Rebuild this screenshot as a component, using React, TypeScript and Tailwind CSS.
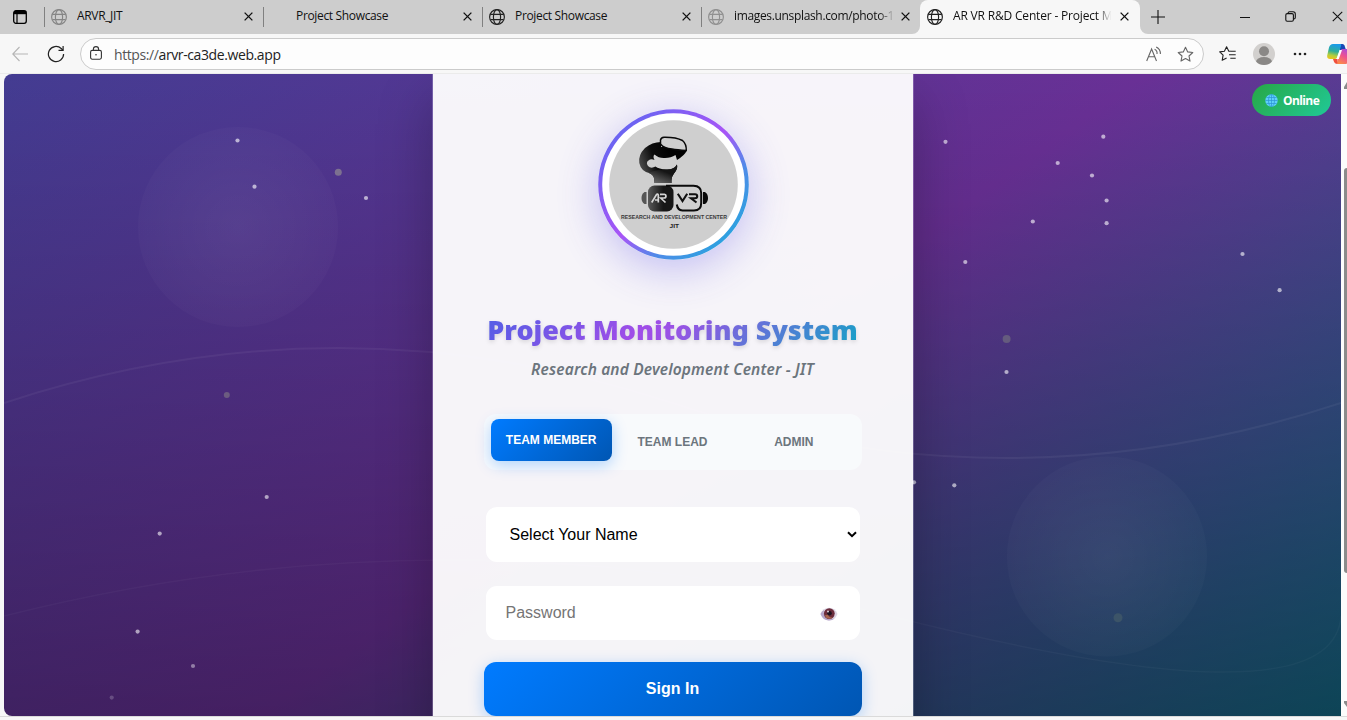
import React from "react";

const uiFont = "font-['Open_Sans','Noto_Sans',sans-serif]";

function Globe({ color }: { color: string }) {
  return (
    <svg width="16" height="16" viewBox="0 0 16 16" fill="none" stroke={color} strokeWidth="1.15" className="shrink-0">
      <circle cx="8" cy="8" r="7.4" />
      <ellipse cx="8" cy="8" rx="3.6" ry="7.4" />
      <path d="M1.4 5.4H14.6M1.4 10.6H14.6" />
    </svg>
  );
}

function Close({ size = 9, width = 1.5 }: { size?: number; width?: number }) {
  return (
    <svg width={size} height={size} viewBox="0 0 10 10" stroke="#111" strokeWidth={width} className="shrink-0">
      <path d="M0.7 0.7L9.3 9.3M9.3 0.7L0.7 9.3" />
    </svg>
  );
}

function Tab({ title, globe, fade }: { title: string; globe?: string; fade?: boolean }) {
  return (
    <div className="flex h-[33px] w-[219px] shrink-0 items-center">
      <div className="h-[20px] w-px bg-[#808080]" />
      <div className="ml-[6px] flex w-4">{globe && <Globe color={globe} />}</div>
      <div
        className={
          "ml-[10px] w-[161px] overflow-hidden whitespace-nowrap pb-px text-[12px] text-[#111] " +
          (fade ? "[mask-image:linear-gradient(to_right,#000_90%,transparent_100%)]" : "")
        }
      >
        <span className="tracking-[-0.34px]">{title}</span>
      </div>
      <div className="ml-[6px] flex">
        <Close />
      </div>
    </div>
  );
}

function TabBar() {
  return (
    <div className="flex h-[34px] w-full items-start bg-[#cdcdcd]">
      <div className="flex h-[33px] w-11 items-center pl-[13px]">
        <svg width="14" height="14" viewBox="0 0 14 14" fill="none" stroke="#000">
          <rect x="0.7" y="0.7" width="12.6" height="12.6" rx="2.2" strokeWidth="1.3" />
          <path d="M1 2.6H13" strokeWidth="3.2" />
          <path d="M4 4V13" strokeWidth="1.2" />
        </svg>
      </div>
      <Tab title="ARVR_JIT" globe="#858585" />
      <Tab title="Project Showcase" />
      <Tab title="Project Showcase" globe="#222" />
      <Tab title="images.unsplash.com/photo-1" globe="#909090" fade />
      <div className="relative flex h-[34px] w-[220px] shrink-0 items-center rounded-t-[8px] bg-[#f7f7f7] pb-px pl-[7px]">
        <svg width="8" height="8" className="absolute -left-[8px] bottom-0">
          <path d="M8 0V8H0A8 8 0 0 0 8 0Z" fill="#f7f7f7" />
        </svg>
        <svg width="8" height="8" className="absolute -right-[8px] bottom-0">
          <path d="M0 0V8H8A8 8 0 0 1 0 0Z" fill="#f7f7f7" />
        </svg>
        <Globe color="#222" />
        <div className="ml-[10px] w-[160px] overflow-hidden whitespace-nowrap pb-px text-[12px] text-[#111] [mask-image:linear-gradient(to_right,#000_90%,transparent_99%)]">
          <span className="tracking-[-0.18px]">AR VR R&amp;D Center - Project M</span>
        </div>
        <div className="ml-[7px] flex">
          <Close />
        </div>
      </div>
      <div className="flex h-[33px] flex-1 items-center overflow-hidden pl-[11px]">
        <svg width="14" height="14" viewBox="0 0 14 14" stroke="#111" strokeWidth="1.1" className="shrink-0">
          <path d="M7 0V14M0 7H14" />
        </svg>
        <svg width="10" height="10" viewBox="0 0 10 10" stroke="#111" strokeWidth="1" className="ml-[75px] shrink-0">
          <path d="M0 5.5H10" />
        </svg>
        <svg width="11" height="11" viewBox="0 0 11 11" fill="none" stroke="#111" strokeWidth="1.1" className="ml-[35px] shrink-0">
          <rect x="0.8" y="2.6" width="7.6" height="7.6" rx="1.4" />
          <path d="M3 2.4V2.2A1.6 1.6 0 0 1 4.6 .7H8A2.3 2.3 0 0 1 10.3 3V6.4A1.6 1.6 0 0 1 8.8 8" />
        </svg>
        <div className="ml-[36px] flex">
          <Close size={11} width={1} />
        </div>
      </div>
    </div>
  );
}

function Star({ color }: { color: string }) {
  return (
    <path
      d="M8.5 1.2L10.7 5.9L15.8 6.5L12 10L13 15.1L8.5 12.6L4 15.1L5 10L1.2 6.5L6.3 5.9Z"
      fill="none"
      stroke={color}
      strokeWidth="1.1"
      strokeLinejoin="round"
    />
  );
}

function Toolbar() {
  return (
    <div className="flex h-[39px] w-full items-center overflow-hidden bg-[#f7f7f7] pl-[12px] pt-px">
      <svg width="16" height="16" viewBox="0 0 16 16" fill="none" stroke="#b5b5b5" strokeWidth="1.1" className="shrink-0">
        <path d="M7.5 1L.8 8L7.5 15M.8 8H16" />
      </svg>
      <svg width="18" height="18" viewBox="0 0 18 18" fill="none" stroke="#222" strokeWidth="1.2" className="ml-[19px] shrink-0">
        <path d="M16.6 9A7.6 7.6 0 1 1 14.2 3.5L16 5.2" />
        <path d="M16.1 1V5.4H11.5" />
      </svg>
      <div className="ml-[15px] flex h-[32px] w-[1124px] shrink-0 items-center rounded-full border border-[#cbcbcb] bg-[#fdfdfd] pl-[9px]">
        <svg width="12" height="14" viewBox="0 0 12 14" fill="none" stroke="#333" strokeWidth="1.1" className="relative -top-px">
          <rect x="0.6" y="4.4" width="10.8" height="8.8" rx="1.6" />
          <path d="M3.4 4.4V3.2A2.6 2.6 0 0 1 8.6 3.2V4.4" />
          <circle cx="6" cy="8.8" r="0.8" fill="#333" stroke="none" />
        </svg>
        <div className="ml-[12px] flex-1 whitespace-nowrap text-[14px] tracking-[-0.4px] text-[#222]">
          <span className="text-[#555]">https://</span>arvr-ca3de.web.app
        </div>
        <svg width="16" height="16" viewBox="0 0 16 16" fill="none" stroke="#666" strokeWidth="1.1">
          <path d="M.7 15L5.6 3L10.5 15M2.4 10.8H8.9" />
          <path d="M8.6 3.2A4.5 4.5 0 0 1 11 8M10.2 1A7.5 7.5 0 0 1 14.4 8" />
        </svg>
        <svg width="17" height="17" viewBox="0 0 17 17" className="ml-[15px] mr-[9px]">
          <Star color="#666" />
        </svg>
      </div>
      <svg width="17" height="16" viewBox="0 0 17 16" fill="none" stroke="#222" strokeWidth="1.1" strokeLinejoin="round" className="ml-[15px] shrink-0">
        <path d="M11.5 5.3L9.8 5.2L7.6 .8L5.4 5.2L.7 5.9L4.1 9.2L3.2 14.3L7.6 12" />
        <path d="M11.3 5.2H16.7M10 8.7H16.7M11.3 12.2H16.7" />
      </svg>
      <svg width="22" height="22" viewBox="0 0 22 22" className="ml-[17px] shrink-0">
        <defs>
          <clipPath id="avatar">
            <circle cx="11" cy="11" r="11" />
          </clipPath>
        </defs>
        <circle cx="11" cy="11" r="11" fill="#d2d0ce" />
        <g clipPath="url(#avatar)" fill="#8a8886">
          <circle cx="11" cy="8.2" r="5" />
          <ellipse cx="11" cy="19" rx="8" ry="5" />
        </g>
      </svg>
      <svg width="14" height="4" viewBox="0 0 14 4" fill="#222" className="ml-[18px] shrink-0">
        <circle cx="2" cy="2" r="1.3" />
        <circle cx="7" cy="2" r="1.3" />
        <circle cx="12" cy="2" r="1.3" />
      </svg>
      <svg width="24" height="22" viewBox="0 0 24 22" className="ml-[20px] shrink-0">
        <defs>
          <linearGradient id="cpA" x1="0.4" y1="0" x2="0.2" y2="1">
            <stop offset="0" stopColor="#1a9be8" />
            <stop offset="0.45" stopColor="#2fae98" />
            <stop offset="0.75" stopColor="#b6cf3a" />
            <stop offset="1" stopColor="#f0c21c" />
          </linearGradient>
          <linearGradient id="cpB" x1="0.8" y1="0" x2="0.3" y2="1">
            <stop offset="0" stopColor="#a34be6" />
            <stop offset="0.5" stopColor="#ee5090" />
            <stop offset="1" stopColor="#fb8a4a" />
          </linearGradient>
        </defs>
        <path d="M11 1H15.5Q17 1 17.500 2.500L19 7H13Z" fill="#1748b5" />
        <path d="M6 1H13.5Q14.6 1 14 3L10.6 14Q10 16 8 16H3Q-.5 16 .3 12L2 4.5Q3 1 6 1Z" fill="url(#cpA)" />
        <path d="M15.6 6H21Q24.5 6 23.8 10L22 17.5Q21 21 18 21H11Q9.6 21 10.2 19L13.4 8Q14 6 15.6 6Z" fill="url(#cpB)" />
        <path d="M6 16H10.5L10.500 21Q7.500 21 6.500 17.500Z" fill="#f0503c" />
        <path d="M12.6 7H15L11.8 16H9.400Z" fill="#fff" />
      </svg>
    </div>
  );
}

const stars: [number, number, number, number][] = [
  [237.5, 140.5, 2.1, 0.62], [254.5, 186.7, 2.1, 0.62], [366, 198, 2.1, 0.62], [266.7, 497, 2.1, 0.58],
  [159.7, 533.6, 2.1, 0.58], [137.6, 631.6, 2.1, 0.58], [193, 666, 2.1, 0.42], [111.7, 697.6, 2.1, 0.2],
  [945.5, 141.8, 2.1, 0.6], [1103.3, 136.7, 2.1, 0.6], [1057.7, 163, 2.1, 0.6], [1092, 175.5, 2.1, 0.6],
  [1106.6, 200.5, 2.1, 0.6], [1106.6, 223.2, 2.1, 0.6], [1032.8, 221.5, 2.1, 0.6], [965.3, 262, 2.1, 0.6],
  [1242.5, 254, 2.1, 0.6], [1279.6, 290.2, 2.1, 0.6], [1006.5, 372, 2.1, 0.6], [954.3, 485.3, 2.1, 0.6],
  [914, 482.3, 2.1, 0.6],
];

const orbs: [number, number, number, string][] = [
  [338.3, 172.2, 3.5, "#7c7090"], [226.8, 395, 3, "#6c5c80"],
  [1006.6, 339, 4, "#655b7e"], [1118, 617.7, 4.5, "#3c5468"],
];

function Backdrop() {
  return (
    <svg width="1337" height="642" viewBox="4 74 1337 642" className="absolute inset-0" fill="none">
      <defs>
        <radialGradient id="bubble">
          <stop offset="0" stopColor="#fff" stopOpacity="0.06" />
          <stop offset="1" stopColor="#fff" stopOpacity="0.02" />
        </radialGradient>
      </defs>
      <path d="M4 403Q338 293 672.5 403T1341 403" stroke="#fff" strokeOpacity="0.05" strokeWidth="2" />
      <path d="M4 616Q447 504 890 616T1341 616" stroke="#fff" strokeOpacity="0.03" strokeWidth="1.5" />
      <circle cx="238" cy="227" r="100" fill="url(#bubble)" />
      <circle cx="1107" cy="556.5" r="100" fill="url(#bubble)" />
      {orbs.map(([x, y, r, c]) => (
        <circle key={x} cx={x} cy={y} r={r} fill={c} />
      ))}
      {stars.map(([x, y, r, o]) => (
        <circle key={x + "-" + y} cx={x} cy={y} r={r} fill="#fff" fillOpacity={o} />
      ))}
    </svg>
  );
}

function Logo() {
  return (
    <div className="ml-px flex h-[151px] w-[151px] shrink-0 rounded-full shadow-[0_10px_40px_rgba(79,70,229,0.3)]">
      <svg width="151" height="151" viewBox="0 0 151 151">
        <defs>
          <linearGradient id="ring" x1="0" y1="0" x2="1" y2="1">
            <stop offset="0.1" stopColor="#6366f1" />
            <stop offset="0.5" stopColor="#a855f7" />
            <stop offset="0.68" stopColor="#4f8be8" />
            <stop offset="0.85" stopColor="#2fa0e0" />
          </linearGradient>
          <linearGradient id="ink" x1="0" y1="0.5" x2="0.7" y2="0.3">
            <stop offset="0" stopColor="#4a4a4a" />
            <stop offset="0.45" stopColor="#0c0c0c" />
            <stop offset="1" stopColor="#000" />
          </linearGradient>
          <linearGradient id="neck" x1="0" y1="1" x2="0.6" y2="0">
            <stop offset="0" stopColor="#777" />
            <stop offset="0.7" stopColor="#151515" />
          </linearGradient>
          <linearGradient id="lens" x1="0" y1="0" x2="1" y2="0">
            <stop offset="0" stopColor="#5a5a5a" />
            <stop offset="0.6" stopColor="#161616" />
          </linearGradient>
        </defs>
        <circle cx="75.5" cy="75.5" r="75.3" fill="url(#ring)" />
        <circle cx="75.5" cy="75.5" r="71.3" fill="#fff" />
        <circle cx="75.5" cy="75.5" r="64.3" fill="#cfcfcf" />
        <path
          d="M63 33Q54 33 47 39Q40 46 41.300 54Q43 62 51 64Q55 65.500 56 69L56.500 74H73.500Q73 68.500 76 64.500Q80 60 79 55.500Q76 61 68 60.500Q61 60 57.500 57.500Q53 60 50 57Q47.500 53.500 50.500 51.500Q53 49.500 56.500 51Q54.500 47.500 56.500 45.500Q61 49.500 67 49Q73 49 77.500 46L79 51Q87 46 88.500 42Q80 37 63 38Z"
          fill="url(#ink)"
        />
        <path d="M51 64Q58 60 68 60.500Q76 61 79 55.500Q80 60 76 64.500Q73 68.500 73.500 74H56.500L56 69Q55 65.500 51 64Z" fill="url(#neck)" />
        <path
          d="M62.500 31Q63 28.500 66 28.200Q78 28 84.500 31.500Q88.500 35 88.300 41.500Q79 41 74 40Q66 39.500 62.500 35Z"
          fill="#cfcfcf"
          stroke="#080808"
          strokeWidth="1.500"
        />
        <path d="M48.500 83H46.500Q43.500 85 43.500 89Q43.500 93 46.500 95H48.500Z" fill="#555" />
        <path d="M105 83H107Q110 85 110 89Q110 93 107 95H105Z" fill="#080808" />
        <rect x="50" y="76.500" width="25.500" height="26" rx="6.500" fill="url(#lens)" />
        <path
          d="M68 76.800H95.500Q103.200 77 103.200 84V94Q103.200 101.500 96 101.500H84.500Q79.500 101 78.800 95.500"
          fill="none"
          stroke="#0b0b0b"
          strokeWidth="2"
        />
        <g fill="none" strokeWidth="1.7">
          <path d="M53.700 93.500L58.500 85.500Q59.800 84.500 60.300 86V93.500M57 91H60.500" stroke="#d4d4d4" />
          <path d="M62 85.300H66.500Q68 85.300 68 87Q68 89 66 89H62.800L67.500 93.500" stroke="#d4d4d4" />
          <path d="M79.800 84.800L84.500 92L89.200 84.800M91 85.200H97Q99.200 85.200 99.200 87.300Q99.200 89.300 97 89.300H93L98.500 93.500" stroke="#111" strokeWidth="2.1" />
        </g>
        <text x="23" y="110.400" fontSize="5" fontWeight="700" fill="#3a3a3a" fontFamily="Liberation Sans" textLength="106" lengthAdjust="spacingAndGlyphs">
          RESEARCH AND DEVELOPMENT CENTER
        </text>
        <text x="71.500" y="119.200" fontSize="6.200" fontWeight="700" fill="#222" fontFamily="Liberation Sans" textLength="9.500" lengthAdjust="spacingAndGlyphs">
          JIT
        </text>
      </svg>
    </div>
  );
}

function EyeIcon() {
  return (
    <svg width="18" height="14" viewBox="0 0 18 14">
      <path d="M.5 7Q3 .8 9 .8T17.500 7Q15 13.500 9 13.500T.5 7Z" fill="#ddd5e4" />
      <path d="M.5 7Q3 13.500 9 13.500Q12.500 13.500 14.500 11.500Q8 13 4.500 9Q3 6 4 3Q1.500 4.500 .5 7Z" fill="#b5a6cb" />
      <circle cx="9.300" cy="6.600" r="5.400" fill="#6b2c3c" />
      <path d="M4.800 8.500A5 5 0 0 0 12.800 10.500Q9 11 8 7.500Z" fill="#a8654e" />
      <circle cx="9.500" cy="6.200" r="2.300" fill="#1d1220" />
      <circle cx="8" cy="4.500" r="0.900" fill="#e8e0ea" />
    </svg>
  );
}

function LoginCard() {
  return (
    <div className="flex h-[760px] w-[482px] shrink-0 flex-col items-center border-x border-white/20 bg-white/95 bg-clip-padding px-[51px] pt-[35px] shadow-[0_25px_50px_rgba(0,0,0,0.25)]">
      <Logo />
      <h1 className="mt-[49px] h-[42px] whitespace-nowrap bg-[linear-gradient(135deg,#4f5fe5_0%,#a04de8_42%,#9a52e5_50%,#12a3c6_100%)] bg-clip-text font-['Noto_Sans','Open_Sans',sans-serif] text-[27px] font-black leading-[42px] tracking-[-0.05px] text-transparent drop-shadow-[0_2px_2px_rgba(0,0,0,0.12)]">
        Project Monitoring System
      </h1>
      <p className="mt-[7px] h-[22px] whitespace-nowrap font-['Noto_Sans','Open_Sans',sans-serif] text-[15.500px] font-semibold italic leading-[22px] tracking-[0.150px] text-[#6c757d]">
        Research and Development Center - JIT
      </p>
      <div className="mt-[34px] flex h-[56px] w-[378px] rounded-[12px] bg-[#f8fafc] p-[7px] font-['Liberation_Sans',Arial,sans-serif] text-[12px] font-bold text-[#6c757d]">
        <button className="mt-[-2px] h-[42px] flex-1 rounded-[8px] bg-[linear-gradient(135deg,#007bff,#0056b3)] text-white shadow-[0_4px_15px_rgba(0,123,255,0.3)]">
          TEAM MEMBER
        </button>
        <button className="h-[42px] flex-1">TEAM LEAD</button>
        <button className="h-[42px] flex-1">ADMIN</button>
      </div>
      <div className="mt-[37px] flex h-[55px] w-[374px] items-center justify-between rounded-[11px] bg-white pl-[24px] pr-[3px] font-['Liberation_Sans',Arial,sans-serif] text-[16px] text-black">
        <span>Select Your Name</span>
        <svg width="10" height="7" viewBox="0 0 10 7" fill="none" stroke="#000" strokeWidth="2">
          <path d="M1 1.200L5 5.200L9 1.200" />
        </svg>
      </div>
      <div className="mt-[24px] flex h-[54px] w-[374px] items-center justify-between rounded-[11px] bg-white pl-[20px] pr-[22px] font-['Liberation_Sans',Arial,sans-serif] text-[16px] text-[#757575]">
        <span>Password</span>
        <span className="pt-[2px]">
          <EyeIcon />
        </span>
      </div>
      <button className="mt-[22px] h-[54px] w-[378px] rounded-[12px] bg-[linear-gradient(135deg,#007bff,#0056b3)] font-['Liberation_Sans',Arial,sans-serif] text-[16px] font-bold text-white shadow-[0_4px_15px_rgba(0,123,255,0.3)]">
        Sign In
      </button>
    </div>
  );
}

function OnlineBadge() {
  return (
    <div className="absolute right-[10px] top-[10px] flex h-[32px] w-[79px] items-center rounded-full bg-[linear-gradient(135deg,#28a745,#20c997)] pl-[13px] text-[12px] font-bold text-white">
      <svg width="13" height="13" viewBox="0 0 13 13" fill="none" stroke="#2d93d6" strokeWidth="0.700" className="shrink-0">
        <circle cx="6.500" cy="6.500" r="6.200" fill="#5fd0fb" stroke="none" />
        <ellipse cx="6.500" cy="6.500" rx="3" ry="6.200" />
        <path d="M6.500 .3V12.700M.3 6.500H12.700M1.300 3.500H11.700M1.300 9.500H11.700" />
      </svg>
      <span className="ml-[5px] pt-px tracking-[-0.600px]">Online</span>
    </div>
  );
}

export default function App() {
  return (
    <div className={"flex h-[720px] w-[1347px] flex-col overflow-hidden bg-[#f7f7f7] " + uiFont}>
      <TabBar />
      <Toolbar />
      <div className="h-px w-full bg-[#ebebeb]" />
      <div className="flex h-[642px] w-full shrink-0 pl-[4px]">
        <div className="relative flex w-[1337px] shrink-0 items-start justify-center overflow-hidden rounded-l-[8px] bg-[linear-gradient(to_bottom,rgba(0,0,0,0),rgba(0,0,0,0.35)),linear-gradient(to_bottom_right,#3d3e91_0%,#693096_50%,#007680_100%)] bg-[length:1337px_642px,1337px_966px] bg-[position:0_0,0_-140px] bg-no-repeat">
          <Backdrop />
          <div className="relative flex">
            <LoginCard />
          </div>
          <OnlineBadge />
        </div>
        <div className="flex w-[6px] flex-col items-end overflow-hidden bg-[#fcfcfc]">
          <svg width="3" height="7" viewBox="0 0 3 7" className="mt-[8px] shrink-0">
            <path d="M0 7V5L3 0V7Z" fill="#8b8b8b" />
          </svg>
          <div className="mt-[79px] h-[405px] w-[3px] shrink-0 rounded-l-[3px] bg-[#8b8b8b]" />
          <svg width="3" height="6" viewBox="0 0 3 6" className="mt-[128px] shrink-0">
            <path d="M0 0V2L3 6V0Z" fill="#8b8b8b" />
          </svg>
        </div>
      </div>
      <div className="h-px w-full shrink-0 bg-[#dadada]" />
    </div>
  );
}
